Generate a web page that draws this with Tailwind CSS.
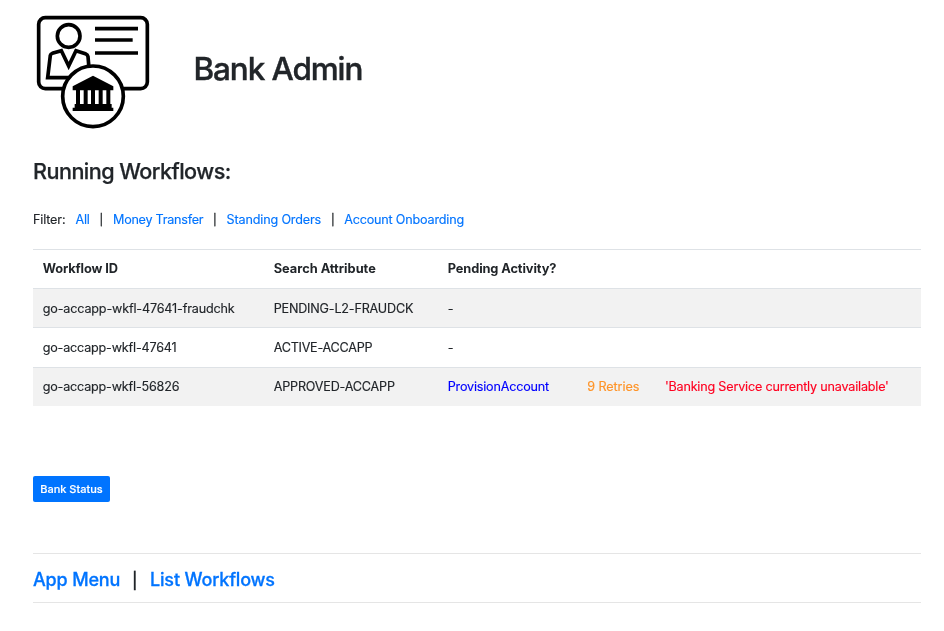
<!DOCTYPE html>
<html lang="en">
<head>
<meta charset="utf-8">
<title>Bank Admin</title>
<script src="https://cdn.jsdelivr.net/npm/@tailwindcss/browser@4"></script>
</head>
<body class="bg-white text-[#212529] font-[Inter,'Liberation_Sans',sans-serif] text-[12.6px] leading-[19px] tracking-[-0.19px] [-webkit-text-stroke:0.15px] overflow-hidden">
<main class="w-[888px] ml-[33px] will-change-transform">
  <header class="flex h-[138px] pt-2">
    <svg class="w-[130px] h-[130px] -ml-[3px] shrink-0" viewBox="0 0 390 390" fill="none" stroke="#000" stroke-width="11">
      <rect x="26" y="29" width="326" height="213" rx="20"/>
      <circle cx="116" cy="84" r="34"/>
      <path d="M195 62H324M195 96H308M195 135H324"/>
      <path d="M120 209H53L61 142Q62 138 67 136L94 128L116 174L138 128L166 137Q173 140 174 146L177 180"/>
      <circle cx="189" cy="265" r="91" fill="#fff"/>
      <path d="M189 203L250 235V247H128V235ZM138 247h12v42h-12zM161 247h12v42h-12zM183 247h12v42h-12zM206 247h12v42h-12zM229 247h12v42h-12zM134 288H245V299H250V309H128V299H134Z" fill="#000" stroke="none"/>
    </svg>
    <h1 class="ml-[33.5px] mt-[41px] text-[31.5px] leading-[40px] font-medium tracking-[-1.12px] [-webkit-text-stroke:0.4px] whitespace-nowrap">Bank Admin</h1>
  </header>
  <h2 class="mt-[19px] text-[21.6px] leading-[28px] font-medium tracking-[-0.53px] [-webkit-text-stroke:0.25px]">Running Workflows:</h2>
  <nav class="mt-[25px] flex h-[19px] whitespace-nowrap">
    <span class="w-[42.5px] tracking-[-0.15px]">Filter:</span>
    <a class="w-[24px] text-[#0074ff]">All</a><span class="w-[13.5px] pt-px text-[11px] [-webkit-text-stroke:0.3px]">|</span>
    <a class="w-[100px] text-[#0074ff] tracking-[-0.25px]">Money Transfer</a><span class="w-[13.5px] pt-px text-[11px] [-webkit-text-stroke:0.3px]">|</span>
    <a class="w-[104.5px] text-[#0074ff] tracking-[-0.15px]">Standing Orders</a><span class="w-[13.2px] pt-px text-[11px] [-webkit-text-stroke:0.3px]">|</span>
    <a class="text-[#0074ff]">Account Onboarding</a>
  </nav>
  <table class="mt-[20px] w-full table-fixed border-separate border-spacing-0 text-left whitespace-nowrap [&_td]:p-0 [&_td]:pl-[9.7px] [&_th]:p-0 [&_th]:pl-[9.7px] [&_td]:border-t [&_th]:border-t [&_td]:border-[#dee2e6] [&_th]:border-[#dee2e6]">
    <colgroup><col class="w-[231px]"><col class="w-[174px]"><col class="w-[483px]"></colgroup>
    <thead><tr class="h-[39px] font-bold text-[12.8px] tracking-[-0.1px] [-webkit-text-stroke:0]"><th class="pb-px!">Workflow ID</th><th class="pb-px! tracking-normal">Search Attribute</th><th class="pb-px!">Pending Activity?</th></tr></thead>
    <tbody>
      <tr class="h-[39px] bg-[#f2f2f2]"><td class="tracking-[-0.16px]">go-accapp-wkfl-47641-fraudchk</td><td>PENDING-L2-FRAUDCK</td><td>-</td></tr>
      <tr class="h-[40px]"><td>go-accapp-wkfl-47641</td><td class="tracking-[-0.25px]">ACTIVE-ACCAPP</td><td>-</td></tr>
      <tr class="h-[39px] bg-[#f2f2f2]"><td class="pb-px!">go-accapp-wkfl-56826</td><td class="pb-px!">APPROVED-ACCAPP</td><td class="pb-px!"><div class="flex"><span class="w-[139.5px] text-[#0000ff]">ProvisionAccount</span><span class="w-[77.7px] text-[#ff9428] tracking-[-0.06px]">9 Retries</span><span class="text-[#ff0020]">'Banking Service currently unavailable'</span></div></td></tr>
    </tbody>
  </table>
  <button class="mt-[70px] block h-[26px] w-[77px] rounded-[2px] bg-[#0074ff] text-white text-[11px] leading-[26px] tracking-normal font-medium whitespace-nowrap">Bank Status</button>
  <footer class="mt-[51px] flex h-[50px] border-y border-black/10 pt-[13px] text-[18px] leading-[25px] font-medium tracking-[-0.17px] [-webkit-text-stroke:0.3px] whitespace-nowrap">
    <a class="w-[99px] text-[#0074ff]">App Menu</a><span class="w-[18px] pt-px text-[16px]">|</span><a class="text-[#0074ff]">List Workflows</a>
  </footer>
</main>
</body>
</html>
